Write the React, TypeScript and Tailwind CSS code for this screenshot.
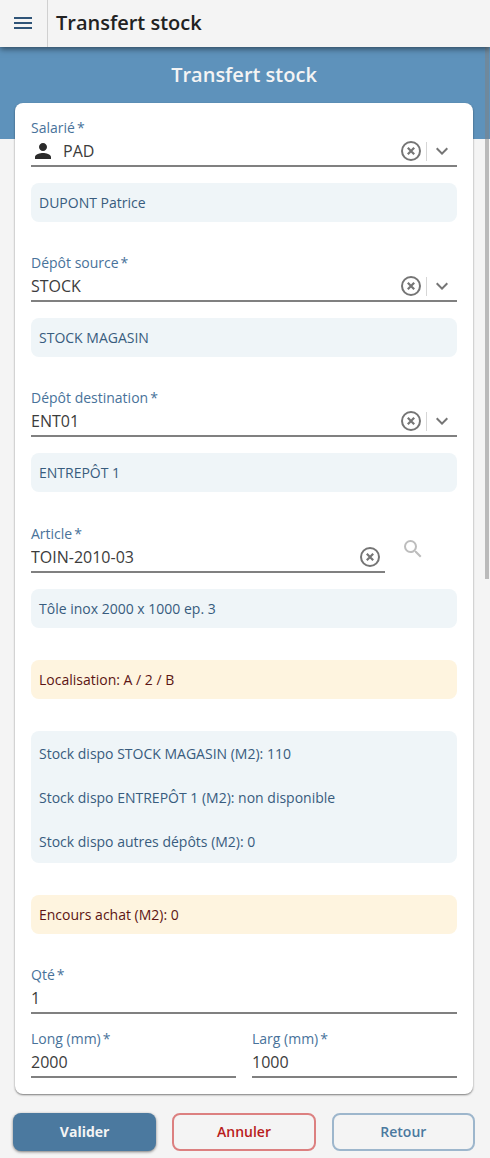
import { useState } from "react";
import type { ReactNode } from "react";
import { MdExpandMore, MdMenu, MdPerson, MdSearch } from "react-icons/md";

const ClearIcon = () => (
  <svg viewBox="0 0 20 20" className="h-5 w-5" fill="none" stroke="currentColor">
    <circle cx="10" cy="10" r="9" strokeWidth="2" />
    <path d="M6.8 6.8l6.4 6.4M13.2 6.8l-6.4 6.4" strokeWidth="2.2" />
  </svg>
);

const Label = ({ id, children }: { id: string; children: ReactNode }) => (
  <label htmlFor={id} className="block h-[18px] text-sm leading-[18px] text-[#48729a]">
    {children}
    <span className="ml-0.5">*</span>
  </label>
);

const Info = ({ children }: { children: ReactNode }) => (
  <p className="rounded-lg bg-[#eff5f8] px-2 py-[9px] text-sm leading-[21px] text-[#385c7e]">
    {children}
  </p>
);

const Warning = ({ children }: { children: ReactNode }) => (
  <p className="rounded-lg bg-[#fef4df] px-2 py-[9px] text-sm leading-[21px] text-[#5c1414]">
    {children}
  </p>
);

type SelectFieldProps = {
  id: string;
  label: string;
  value: string;
  info: string;
  icon?: ReactNode;
};

const SelectField = ({ id, label, value, info, icon }: SelectFieldProps) => {
  const [current, setCurrent] = useState(value);

  return (
    <div className="flex flex-col gap-4">
      <div>
        <Label id={id}>{label}</Label>
        <div className="relative flex h-[30px] items-center border-b-2 border-[#808080]">
          {icon}
          <select
            id={id}
            value={current}
            onChange={(e) => setCurrent(e.target.value)}
            className="h-full w-full flex-1 appearance-none bg-transparent pr-20 text-base text-[#3c3c3c] outline-none"
          >
            <option value=""></option>
            <option value={value}>{value}</option>
          </select>
          <div className="pointer-events-none absolute inset-y-0 right-[3px] flex items-center text-[#757575]">
            <button
              type="button"
              aria-label={`Effacer ${label}`}
              onClick={() => setCurrent("")}
              className="pointer-events-auto"
            >
              <ClearIcon />
            </button>
            <span className="ml-[5px] h-[19px] w-px bg-[#d6d6d6]" />
            <MdExpandMore className="ml-[3px] h-6 w-6" />
          </div>
        </div>
      </div>
      <Info>{info}</Info>
    </div>
  );
};

const NumberField = ({ id, label, value }: { id: string; label: string; value: string }) => (
  <div className="min-w-0 flex-1">
    <Label id={id}>{label}</Label>
    <input
      id={id}
      type="text"
      inputMode="numeric"
      defaultValue={value}
      className="block h-[30px] w-full border-b-2 border-[#808080] bg-transparent text-base text-[#3c3c3c] outline-none"
    />
  </div>
);

const App = () => {
  const [article, setArticle] = useState("TOIN-2010-03");

  return (
    <div className="relative min-h-screen bg-[#f4f4f4] font-['Open_Sans',sans-serif]">
      <header className="relative z-10 flex h-[47px] items-center bg-[#f4f4f4] shadow-[0_2px_6px_rgba(0,0,0,0.5)]">
        <button
          type="button"
          aria-label="Menu"
          className="flex h-full w-12 items-center border-r border-[#d0d0d0] pb-px pl-[11px] text-[#2f5478]"
        >
          <MdMenu className="h-6 w-6" />
        </button>
        <span className="pb-px pl-2 text-xl font-semibold text-[#222222]">Transfert stock</span>
      </header>

      <div className="h-[92px] bg-[#5e92bb] pt-[14px]">
        <h1 className="pr-[2px] text-center text-xl font-semibold text-[#f4f4f4]">Transfert stock</h1>
      </div>

      <form onSubmit={(e) => e.preventDefault()}>
        <div className="relative -mt-9 mr-[17px] ml-[15px] flex flex-col gap-8 rounded-lg bg-white p-4 shadow-[0_1px_2px_rgba(0,0,0,0.5)]">
          <SelectField
            id="salarie"
            label="Salarié"
            value="PAD"
            info="DUPONT Patrice"
            icon={<MdPerson className="mr-2 h-6 w-6 shrink-0 text-[#2b2b2b]" />}
          />
          <SelectField id="source" label="Dépôt source" value="STOCK" info="STOCK MAGASIN" />
          <SelectField id="destination" label="Dépôt destination" value="ENT01" info="ENTREPÔT 1" />

          <div className="flex flex-col gap-4">
            <div className="flex items-center">
              <div className="min-w-0 flex-1 pt-px">
                <Label id="article">Article</Label>
                <div className="flex h-[30px] items-center border-b-2 border-[#808080] pr-[5px]">
                  <input
                    id="article"
                    type="text"
                    value={article}
                    onChange={(e) => setArticle(e.target.value)}
                    className="h-full w-full min-w-0 flex-1 bg-transparent text-base text-[#3c3c3c] outline-none"
                  />
                  <button
                    type="button"
                    aria-label="Effacer Article"
                    onClick={() => setArticle("")}
                    className="text-[#757575]"
                  >
                    <ClearIcon />
                  </button>
                </div>
              </div>
              <button
                type="button"
                aria-label="Rechercher un article"
                className="mr-6 ml-2 flex h-10 w-10 items-center justify-center text-[#bdbdbd]"
              >
                <MdSearch className="h-6 w-6" />
              </button>
            </div>
            <Info>Tôle inox 2000 x 1000 ep. 3</Info>
          </div>

          <Warning>Localisation: A / 2 / B</Warning>

          <div className="rounded-lg bg-[#eff5f8] px-2 text-sm text-[#385c7e]">
            <p className="pt-3 pb-[11px] leading-[21px]">Stock dispo STOCK MAGASIN (M2): 110</p>
            <p className="pt-3 pb-[11px] leading-[21px]">Stock dispo ENTREPÔT 1 (M2): non disponible</p>
            <p className="pt-3 pb-[11px] leading-[21px]">Stock dispo autres dépôts (M2): 0</p>
          </div>

          <Warning>Encours achat (M2): 0</Warning>

          <div className="flex flex-col gap-4">
            <NumberField id="qte" label="Qté" value="1" />
            <div className="flex gap-4">
              <NumberField id="long" label="Long (mm)" value="2000" />
              <NumberField id="larg" label="Larg (mm)" value="1000" />
            </div>
          </div>
        </div>

        <div className="grid grid-cols-3 gap-4 pt-[19px] pr-[15px] pb-[7px] pl-[13px] text-sm">
          <button
            type="submit"
            className="h-[38px] rounded-lg bg-[#4b799f] font-bold text-[#f4f4f4] shadow-[0_1px_3px_rgba(0,0,0,0.5)]"
          >
            Valider
          </button>
          <button
            type="button"
            className="h-[38px] rounded-lg border-2 border-[#dc8080] font-semibold text-[#b91c1c]"
          >
            Annuler
          </button>
          <button
            type="button"
            className="h-[38px] rounded-lg border-2 border-[#9db6cc] font-semibold text-[#4b799f]"
          >
            Retour
          </button>
        </div>
      </form>

      {/* Scroll thumb */}
      <div className="absolute top-[47px] right-px h-[532px] w-1 bg-[#808080]/50" />
    </div>
  );
};

export default App;
